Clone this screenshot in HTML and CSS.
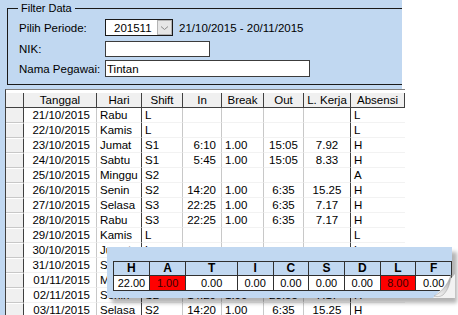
FILE: index.html
```html
<!DOCTYPE html>
<html lang="en">
<head>
    <meta charset="UTF-8">
    <title>Absensi Pegawai</title>
    <link rel="stylesheet" href="styles.css">
</head>
<body>
    <div class="top">
        <fieldset class="filter">
            <legend>Filter Data</legend>
            <div class="row r1">
                <span class="lbl">Pilih Periode:</span>
                <div class="combo">
                    <span class="comboText">201511</span>
                    <span class="comboBtn">
                        <svg width="9" height="6" viewBox="0 0 9 6"><path d="M1 1.5 L4.5 4.5 L8 1.5" fill="none" stroke="#8a8a8a" stroke-width="1"/></svg>
                    </span>
                </div>
                <span class="range">21/10/2015 - 20/11/2015</span>
            </div>
            <div class="row r2">
                <span class="lbl">NIK:</span>
                <input class="field nik" type="text">
            </div>
            <div class="row r3">
                <span class="lbl">Nama Pegawai:</span>
                <input class="field nama" type="text" value="Tintan">
            </div>
        </fieldset>
    </div>

    <div class="main">
        <div class="strip"></div>
        <div class="gridBox">
            <table class="grid">
                <thead>
                    <tr>
                        <th class="ind"></th>
                        <th>Tanggal</th>
                        <th>Hari</th>
                        <th>Shift</th>
                        <th>In</th>
                        <th>Break</th>
                        <th>Out</th>
                        <th>L. Kerja</th>
                        <th>Absensi</th>
                    </tr>
                </thead>
                <tbody>
                    <tr><td class="ind"></td><td class="tgl">21/10/2015</td><td class="hari">Rabu</td><td class="shift">L</td><td class="jam"></td><td class="brk"></td><td class="out"></td><td class="lk"></td><td class="abs">L</td></tr>
                    <tr><td class="ind"></td><td class="tgl">22/10/2015</td><td class="hari">Kamis</td><td class="shift">L</td><td class="jam"></td><td class="brk"></td><td class="out"></td><td class="lk"></td><td class="abs">L</td></tr>
                    <tr><td class="ind"></td><td class="tgl">23/10/2015</td><td class="hari">Jumat</td><td class="shift">S1</td><td class="jam">6:10</td><td class="brk">1.00</td><td class="out">15:05</td><td class="lk">7.92</td><td class="abs">H</td></tr>
                    <tr><td class="ind"></td><td class="tgl">24/10/2015</td><td class="hari">Sabtu</td><td class="shift">S1</td><td class="jam">5:45</td><td class="brk">1.00</td><td class="out">15:05</td><td class="lk">8.33</td><td class="abs">H</td></tr>
                    <tr><td class="ind"></td><td class="tgl">25/10/2015</td><td class="hari">Minggu</td><td class="shift">S2</td><td class="jam"></td><td class="brk"></td><td class="out"></td><td class="lk"></td><td class="abs">A</td></tr>
                    <tr><td class="ind"></td><td class="tgl">26/10/2015</td><td class="hari">Senin</td><td class="shift">S2</td><td class="jam">14:20</td><td class="brk">1.00</td><td class="out">6:35</td><td class="lk">15.25</td><td class="abs">H</td></tr>
                    <tr><td class="ind"></td><td class="tgl">27/10/2015</td><td class="hari">Selasa</td><td class="shift">S3</td><td class="jam">22:25</td><td class="brk">1.00</td><td class="out">6:35</td><td class="lk">7.17</td><td class="abs">H</td></tr>
                    <tr><td class="ind"></td><td class="tgl">28/10/2015</td><td class="hari">Rabu</td><td class="shift">S3</td><td class="jam">22:25</td><td class="brk">1.00</td><td class="out">6:35</td><td class="lk">7.17</td><td class="abs">H</td></tr>
                    <tr><td class="ind"></td><td class="tgl">29/10/2015</td><td class="hari">Kamis</td><td class="shift">L</td><td class="jam"></td><td class="brk"></td><td class="out"></td><td class="lk"></td><td class="abs">L</td></tr>
                    <tr><td class="ind"></td><td class="tgl">30/10/2015</td><td class="hari">Jumat</td><td class="shift">L</td><td class="jam"></td><td class="brk"></td><td class="out"></td><td class="lk"></td><td class="abs">L</td></tr>
                    <tr><td class="ind"></td><td class="tgl">31/10/2015</td><td class="hari">Sabtu</td><td class="shift">L</td><td class="jam"></td><td class="brk"></td><td class="out"></td><td class="lk"></td><td class="abs">L</td></tr>
                    <tr><td class="ind"></td><td class="tgl">01/11/2015</td><td class="hari">Minggu</td><td class="shift">L</td><td class="jam"></td><td class="brk"></td><td class="out"></td><td class="lk"></td><td class="abs">L</td></tr>
                    <tr><td class="ind"></td><td class="tgl">02/11/2015</td><td class="hari">Senin</td><td class="shift">S2</td><td class="jam">14:20</td><td class="brk">1.00</td><td class="out">23:55</td><td class="lk">7.17</td><td class="abs">H</td></tr>
                    <tr><td class="ind"></td><td class="tgl">03/11/2015</td><td class="hari">Selasa</td><td class="shift">S2</td><td class="jam">14:20</td><td class="brk">1.00</td><td class="out">6:35</td><td class="lk">15.25</td><td class="abs">H</td></tr>
                </tbody>
            </table>
        </div>
    </div>

    <!-- ringkasan absensi, melayang di atas grid -->
    <div class="popup">
        <table class="summary">
            <tr>
                <th class="w36">H</th>
                <th class="w37">A</th>
                <th class="w52">T</th>
                <th class="w36">I</th>
                <th class="w36">C</th>
                <th class="w36">S</th>
                <th class="w36">D</th>
                <th class="w36">L</th>
                <th class="w36">F</th>
            </tr>
            <tr>
                <td>22.00</td>
                <td class="red">1.00</td>
                <td>0.00</td>
                <td>0.00</td>
                <td>0.00</td>
                <td>0.00</td>
                <td>0.00</td>
                <td class="red">8.00</td>
                <td>0.00</td>
            </tr>
        </table>
        <svg class="curl" width="22" height="24" viewBox="0 0 22 24">
            <defs>
                <linearGradient id="flap" x1="0" y1="1" x2="1" y2="0">
                    <stop offset="0" stop-color="#fafafa"/>
                    <stop offset="0.55" stop-color="#d4d4d4"/>
                    <stop offset="1" stop-color="#8c8c8c"/>
                </linearGradient>
            </defs>
            <path d="M0 24 L22 24 L22 0 Z" fill="#f2f2f2"/>
            <path d="M1 22 C8 19 14 12 18 1 C17 9 16 15 10 21 C7 23 3 23 1 22 Z" fill="url(#flap)" stroke="#a8a8a8" stroke-width="0.6"/>
        </svg>
    </div>
</body>
</html>
```

FILE: styles.css
```css
html, body {
    margin: 0;
    height: 315px;
    overflow: hidden;
    background-color: #ffffff;
    font-family: "Liberation Sans", Arial, sans-serif;
    font-size: 11.5px;
    color: #000000;
}

.top {
    width: 402px;
    height: 89px;
    background-color: #c1d8f1;
    padding-top: 1px;
    box-sizing: border-box;
    overflow: hidden;
}

.filter {
    margin: 0 -20px 0 7px;
    padding: 4px 0 6px 10px;
    border: 1px solid #1a1a1a;
    height: 84px;
    box-sizing: border-box;
}

.filter legend {
    padding: 0 3px;
    height: 14px;
    line-height: 14px;
    font-size: 11px;
}

.row {
    display: flex;
    align-items: center;
    padding-left: 1px;
}

.r1 { height: 17px; }
.r2 { height: 16px; margin-top: 5px; }
.r3 { height: 17px; margin-top: 3px; }

.lbl {
    width: 86px;
    flex: none;
}

.combo {
    width: 68px;
    height: 17px;
    box-sizing: border-box;
    border: 1px solid #1a1a1a;
    background-color: #ffffff;
    display: flex;
    align-items: center;
}

.comboText {
    flex: 1;
    padding-left: 8px;
}

.comboBtn {
    width: 15px;
    height: 15px;
    box-sizing: border-box;
    background-color: #e6e6e6;
    border: 1px solid #b4b4b4;
    display: flex;
    align-items: center;
    justify-content: center;
}

.range {
    margin-left: 6px;
}

.field {
    height: 17px;
    box-sizing: border-box;
    border: 1px solid #3c3c3c;
    padding: 0 1px;
    margin: 0;
    font-family: inherit;
    font-size: 11.5px;
    background-color: #ffffff;
    outline: none;
}

.nik {
    width: 105px;
    height: 16px;
}

.nama {
    width: 205px;
}

.main {
    display: flex;
}

.strip {
    width: 5px;
    height: 230px;
    background-color: #c1d8f1;
    flex: none;
}

.gridBox {
    width: 400px;
    border-left: 1px solid #404040;
    border-top: 1px solid #808080;
    padding-top: 3px;
    box-sizing: border-box;
    background-color: #ffffff;
}

.grid {
    border-collapse: separate;
    border-spacing: 0;
    table-layout: fixed;
    width: 399px;
}

.grid th, .grid td {
    height: 14px;
    padding: 0;
    line-height: 14px;
    white-space: nowrap;
    overflow: hidden;
    box-sizing: border-box;
}

.grid th {
    background-color: #f0f0f0;
    font-weight: normal;
    border-right: 1px solid #404040;
    border-bottom: 1px solid #404040;
    text-align: center;
}

.grid th:nth-child(1) { width: 18px; }
.grid th:nth-child(2) { width: 73px; }
.grid th:nth-child(3) { width: 45px; }
.grid th:nth-child(4) { width: 41px; }
.grid th:nth-child(5) { width: 39px; }
.grid th:nth-child(6) { width: 42px; }
.grid th:nth-child(7) { width: 40px; }
.grid th:nth-child(8) { width: 47px; }
.grid th:nth-child(9) { width: 54px; }

.grid td {
    border-right: 1px solid #c8c8c8;
    border-bottom: 1px solid #f2f2f2;
}

.grid td.ind {
    background-color: #f0f0f0;
    border-top: 1px solid #ffffff;
    border-right: 1px solid #404040;
    border-bottom: 1px solid #c8c8c8;
    height: 15px;
}

.grid tbody tr:first-child td.ind {
    border-top: none;
}

.tgl { text-align: right; padding-right: 6px !important; }
.hari { padding-left: 3px !important; border-right-color: #404040 !important; }
.shift { padding-left: 3px !important; }
.jam { text-align: right; padding-right: 5px !important; }
.brk { padding-left: 3px !important; }
.out { text-align: center; }
.lk { text-align: center; border-right-color: #404040 !important; }
.abs { padding-left: 3px !important; border-right: none !important; }

.popup {
    position: absolute;
    left: 107px;
    top: 247px;
    width: 345px;
    height: 51px;
    background-color: #c1d8f1;
    box-shadow: 5px 5px 4px rgba(0, 0, 0, 0.3);
    padding: 14px 0 0 6px;
    box-sizing: border-box;
}

.summary {
    border-collapse: collapse;
    table-layout: fixed;
    font-size: 11px;
}

.summary th, .summary td {
    border: 1px solid #303030;
    padding: 0;
    text-align: center;
    white-space: nowrap;
}

.summary th {
    height: 13px;
    font-size: 12px;
    font-weight: bold;
    line-height: 13px;
}

.summary td {
    height: 14px;
    line-height: 14px;
    background-color: #ffffff;
}

.summary td.red {
    background-color: #ff0000;
    color: #3a0000;
}

.w36 { width: 35px; }
.w37 { width: 36px; }
.w52 { width: 51px; }

.curl {
    position: absolute;
    right: -3px;
    bottom: 0;
}
```
